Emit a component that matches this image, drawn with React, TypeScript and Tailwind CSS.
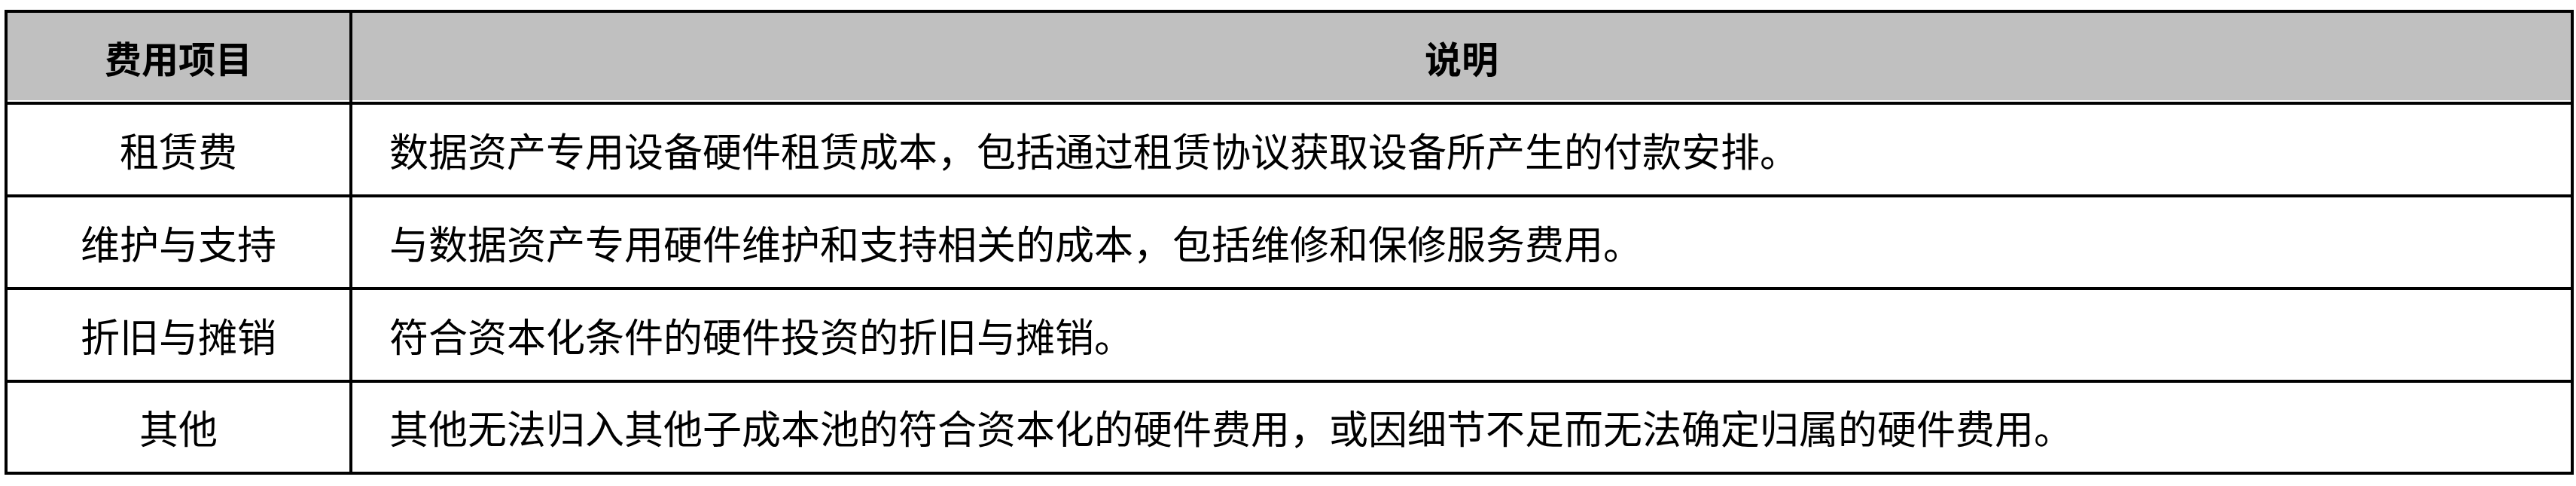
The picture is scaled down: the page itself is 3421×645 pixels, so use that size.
import React from "react";

const rows: [string, string][] = [
  ["租赁费", "数据资产专用设备硬件租赁成本，包括通过租赁协议获取设备所产生的付款安排。"],
  ["维护与支持", "与数据资产专用硬件维护和支持相关的成本，包括维修和保修服务费用。"],
  ["折旧与摊销", "符合资本化条件的硬件投资的折旧与摊销。"],
  ["其他", "其他无法归入其他子成本池的符合资本化的硬件费用，或因细节不足而无法确定归属的硬件费用。"],
];

const heights = ["h-[119px]", "h-[119px]", "h-[119px]", "h-[118px]"];

export default function App() {
  return (
    <div className="w-[3421px] h-[645px] bg-white pt-[13px] pl-[6px] font-['Noto_Sans_CJK_SC',sans-serif] text-black">
      <div className="w-[3412px] bg-black p-[4px] grid grid-cols-[454px_2946px] gap-[4px]">
        <div className="h-[118px] bg-[#c0c0c0] border-b-[2px] border-white flex items-center justify-center text-[49px] font-bold leading-none">
          费用项目
        </div>
        <div className="h-[118px] bg-[#c0c0c0] border-b-[2px] border-white flex items-center justify-center text-[49px] font-bold leading-none">
          说明
        </div>
        {rows.map(([a, b], i) => (
          <React.Fragment key={a}>
            <div className={`${heights[i]} bg-white flex items-center justify-center text-[52px] leading-none`}>
              {a}
            </div>
            <div className={`${heights[i]} bg-white flex items-center pl-[49px] text-[52px] leading-none whitespace-nowrap`}>
              {b}
            </div>
          </React.Fragment>
        ))}
      </div>
    </div>
  );
}
